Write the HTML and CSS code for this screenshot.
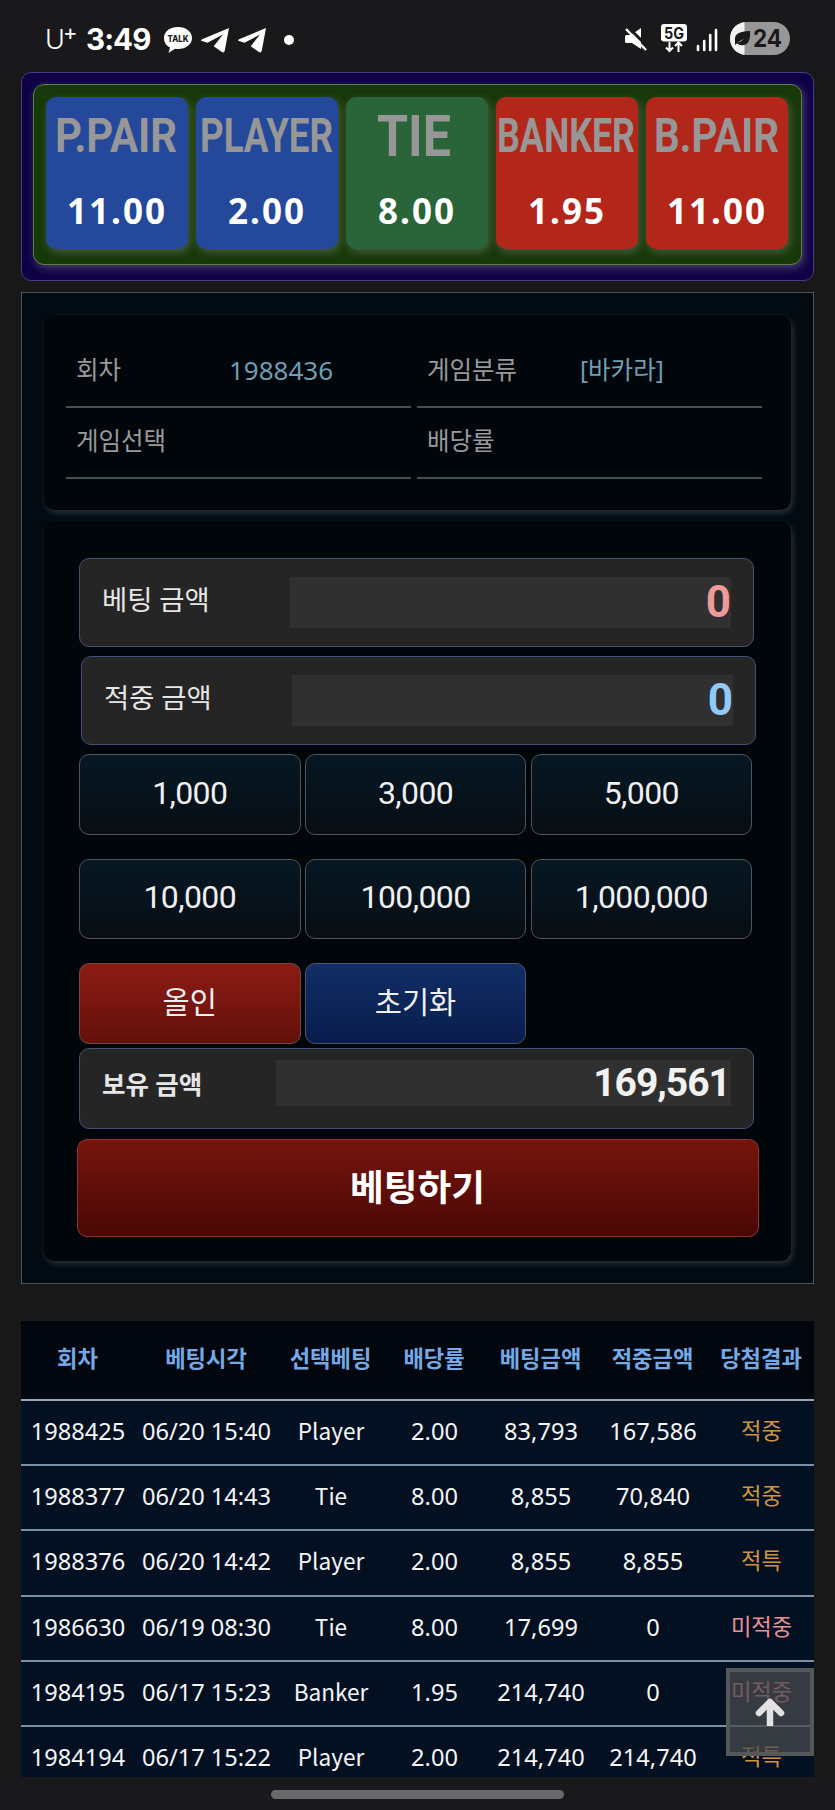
FILE: index.html
```html
<!DOCTYPE html>
<html lang="ko">
<head>
<meta charset="utf-8">
<title>바카라</title>
<link rel="stylesheet" href="styles.css">
</head>
<body>
<div class="phone">
  <header class="status">
    <div class="status-left">
      <span class="carrier">U<sup>+</sup></span>
      <span class="clock">3:49</span>
      <svg class="ic-talk" viewBox="0 0 30 28" width="30" height="28"><path fill="#fff" d="M15 1C7 1 1 5.600 1 12c0 4.500 2.500 8 6 9.500L5.500 27l6.500-4.200c1 .2 2 .2 3 .2 8 0 14-4.700 14-11S23 1 15 1z"/><text x="15" y="16" text-anchor="middle" textLength="21" lengthAdjust="spacingAndGlyphs" class="talk-text">TALK</text></svg>
      <svg class="ic-plane" viewBox="0 0 28 26" width="28" height="26"><path fill="#fff" d="M28 0 23.800 22.500q-.8 3-3.300 1.300l-7.800-5.600L22 6.500 6.500 14.800.8 13q-1.600-.7.300-1.800Z"/></svg>
      <svg class="ic-plane second" viewBox="0 0 28 26" width="28" height="26"><path fill="#fff" d="M28 0 23.800 22.500q-.8 3-3.300 1.300l-7.800-5.600L22 6.500 6.500 14.800.8 13q-1.600-.7.300-1.800Z"/></svg>
      <span class="dot"></span>
    </div>
    <div class="status-right">
      <svg class="ic-mute" viewBox="0 0 24 24" width="24" height="24"><path fill="#fff" d="M17 1v21L8 16H2.500Q1 16 1 14.500V9.500Q1 8 2.500 8H7Z"/><path d="M3 -1 25 21" stroke="#19191b" stroke-width="3"/><path d="M2 2 22 23" stroke="#fff" stroke-width="2.400"/></svg>
      <svg class="ic-5g" viewBox="0 0 26 30" width="26" height="30"><rect x="0" y="0" width="26" height="17.500" rx="3" fill="#fff"/><text x="13" y="14.500" text-anchor="middle" textLength="20" lengthAdjust="spacingAndGlyphs" class="g-text">5G</text><path d="M8.500 18v9M5 23.500 8.500 27l3.500-3.500M17.500 28v-9M14 22l3.500-3.500L21 22" stroke="#fff" stroke-width="2" fill="none"/></svg>
      <svg class="ic-signal" viewBox="0 0 24 24" width="24" height="24"><path d="M3 18v4M9.200 13v9M15.200 7v15M21 2v20" stroke="#fff" stroke-width="2.600" stroke-linecap="round"/></svg>
      <svg class="ic-batt" viewBox="0 0 60 33" width="60" height="33"><defs><clipPath id="pill"><rect width="60" height="33" rx="16.500"/></clipPath></defs><g clip-path="url(#pill)"><rect width="60" height="33" fill="#979797"/><rect width="14.500" height="33" fill="#f1f1f1"/></g><path fill="#19191b" d="M5 19C4 11.500 9 9.500 20 9q1 13-7 14.300-4 .3-6-2Q11 20 14 16.500 9 19.500 5 23z"/><text x="37.500" y="25" text-anchor="middle" textLength="29" lengthAdjust="spacingAndGlyphs" class="batt-text">24</text></svg>
    </div>
  </header>

  <main class="content">
    <section class="odds">
      <div class="odds-inner">
        <div class="odd blue"><svg width="142" height="78"><text x="9" y="55" textLength="122" lengthAdjust="spacingAndGlyphs" class="odd-name">P.PAIR</text></svg><span>11.00</span></div>
        <div class="odd blue"><svg width="142" height="78"><text x="4" y="55" textLength="133" lengthAdjust="spacingAndGlyphs" class="odd-name">PLAYER</text></svg><span>2.00</span></div>
        <div class="odd green"><svg width="142" height="78"><text x="31" y="59" textLength="74" lengthAdjust="spacingAndGlyphs" class="odd-name big">TIE</text></svg><span>8.00</span></div>
        <div class="odd red"><svg width="142" height="78"><text x="1" y="55" textLength="138" lengthAdjust="spacingAndGlyphs" class="odd-name">BANKER</text></svg><span>1.95</span></div>
        <div class="odd red"><svg width="142" height="78"><text x="8" y="55" textLength="125" lengthAdjust="spacingAndGlyphs" class="odd-name">B.PAIR</text></svg><span>11.00</span></div>
      </div>
    </section>

    <section class="panel">
      <div class="card info">
        <div class="info-cell"><span class="k">회차</span><span class="v num">1988436</span></div>
        <div class="info-cell"><span class="k">게임분류</span><span class="v">[바카라]</span></div>
        <div class="info-cell"><span class="k">게임선택</span></div>
        <div class="info-cell"><span class="k">배당률</span></div>
      </div>
      <div class="card bet">
        <div class="field"><span class="label">베팅 금액</span><span class="input pink">0</span></div>
        <div class="field shifted"><span class="label">적중 금액</span><span class="input sky">0</span></div>
        <div class="chips">
          <button>1,000</button><button>3,000</button><button>5,000</button>
          <button>10,000</button><button>100,000</button><button>1,000,000</button>
          <button class="allin">올인</button><button class="reset">초기화</button>
        </div>
        <div class="field balance"><span class="label">보유 금액</span><span class="input">169,561</span></div>
        <button class="submit">베팅하기</button>
      </div>
    </section>

    <table class="history">
      <colgroup><col class="c1"><col class="c2"><col class="c3"><col class="c4"><col class="c5"><col class="c6"><col class="c7"></colgroup>
      <thead><tr><th>회차</th><th>베팅시각</th><th>선택베팅</th><th>배당률</th><th>베팅금액</th><th>적중금액</th><th>당첨결과</th></tr></thead>
      <tbody>
        <tr><td>1988425</td><td>06/20 15:40</td><td class="pick">Player</td><td>2.00</td><td>83,793</td><td>167,586</td><td class="win">적중</td></tr>
        <tr><td>1988377</td><td>06/20 14:43</td><td class="pick">Tie</td><td>8.00</td><td>8,855</td><td>70,840</td><td class="win">적중</td></tr>
        <tr><td>1988376</td><td>06/20 14:42</td><td class="pick">Player</td><td>2.00</td><td>8,855</td><td>8,855</td><td class="win">적특</td></tr>
        <tr><td>1986630</td><td>06/19 08:30</td><td class="pick">Tie</td><td>8.00</td><td>17,699</td><td>0</td><td class="lose">미적중</td></tr>
        <tr><td>1984195</td><td>06/17 15:23</td><td class="pick">Banker</td><td>1.95</td><td>214,740</td><td>0</td><td class="lose">미적중</td></tr>
        <tr><td>1984194</td><td>06/17 15:22</td><td class="pick">Player</td><td>2.00</td><td>214,740</td><td>214,740</td><td class="win">적특</td></tr>
      </tbody>
    </table>
    <div class="to-top"><svg viewBox="0 0 30 28" width="30" height="28"><path fill="none" stroke="#e2e2e2" stroke-width="6.500" stroke-linejoin="round" d="M15 28V6"/><path d="M4 15 15 4l11 11" fill="none" stroke="#e2e2e2" stroke-width="6.500" stroke-linecap="round" stroke-linejoin="round"/></svg></div>
  </main>
  <footer class="nav"><span class="handle"></span></footer>
</div>
</body>
</html>
```

FILE: styles.css
```css
* { box-sizing: border-box; }
body {
  margin: 0;
  background: #181818;
  font-family: "Noto Sans", "Noto Sans CJK KR", sans-serif;
}
svg { display: block; flex: none; }
button { margin: 0; padding: 0; font: inherit; color: inherit; }

.phone {
  width: 835px;
  height: 1810px;
  display: flex;
  flex-direction: column;
  overflow: hidden;
}

/* status bar */
.status {
  flex: none;
  height: 72px;
  padding: 6px 45px 0 45px;
  display: flex;
  justify-content: space-between;
  align-items: center;
  background: #19191b;
  color: #fff;
}
.status-left, .status-right { display: flex; align-items: center; }
.status-right { margin-top: -1px; }
.carrier {
  width: 41px;
  padding-top: 2px;
  font: 300 27px/30px Inter, sans-serif;
  letter-spacing: -1px;
  white-space: nowrap;
}
.carrier sup { font-size: 22px; line-height: 0; font-weight: 400; vertical-align: 9px; margin-left: -1px; }
.clock {
  width: 77px;
  font: 700 29.5px/30px Inter, sans-serif;
  letter-spacing: -0.9px;
}
.ic-talk { margin-top: 2px; }
.talk-text { font: 800 9.5px Inter, sans-serif; fill: #19191b; }
.ic-plane { margin: 4px 0 0 8px; }
.ic-plane.second { margin-left: 9px; }
.dot { width: 10px; height: 10px; margin: 2px 0 0 18px; border-radius: 50%; background: #fff; }
.ic-5g { margin: 0 8px 0 13px; }
.g-text { font: 700 15.5px Inter, sans-serif; fill: #19191b; }
.ic-signal { margin: 2px 11px 0 0; }
.batt-text { font: 700 24px Inter, sans-serif; fill: #19191b; }

.content {
  position: relative;
  flex: 1;
  min-height: 0;
  overflow: hidden;
  padding: 0 21px;
}

/* odds */
.odds {
  width: 793px;
  height: 209px;
  padding: 11px;
  border: 1px solid #483f80;
  border-radius: 10px;
  background: #0f0046;
}
.odds-inner {
  height: 181px;
  padding: 12px;
  display: flex;
  gap: 8px;
  border: 1px solid #5f7c42;
  border-radius: 11px;
  background: #173909;
  box-shadow: 2px 3px 9px rgba(160, 160, 160, .4);
}
.odd {
  width: 142px;
  height: 152px;
  border-radius: 10px;
  text-align: center;
  box-shadow: 2px 3px 8px rgba(150, 150, 150, .4);
}
.odd span {
  display: block;
  margin-top: 11px;
  font-weight: 700;
  font-size: 35px;
  line-height: 50px;
  letter-spacing: 2px;
  color: #fff;
}
.odd-name { font: 700 48px Roboto, sans-serif; fill: #979797; }
.odd-name.big { font-size: 58px; }
.blue { background: #24489a; }
.green { background: #2a6439; }
.red { background: #b3271b; }

/* betting panel */
.panel {
  width: 793px;
  height: 992px;
  margin-top: 11px;
  padding: 22px;
  border: 1px solid #4a545d;
  background: #020a12;
}
.card {
  width: 747px;
  border-radius: 11px;
  background: #00060a;
  box-shadow: 2px 3px 6px rgba(200, 215, 215, .2);
}
.info {
  height: 195px;
  padding: 22px 23px 0 22px;
  display: grid;
  grid-template-columns: 345px 345px;
  grid-auto-rows: 71px;
  column-gap: 6px;
}
.info-cell {
  display: flex;
  align-items: center;
  border-bottom: 2px solid #484d50;
  padding: 0 0 4px 10px;
  font-size: 24.5px;
  line-height: 36px;
}
.k { width: 153px; color: #97999a; }
.v { color: #6f9db3; }
.v.num { font-size: 26px; }
.bet {
  height: 740px;
  margin-top: 11px;
  padding: 37px 33px 0 35px;
}
.field {
  width: 675px;
  height: 89px;
  padding: 0 22px;
  display: flex;
  align-items: center;
  justify-content: space-between;
  border: 1px solid #465073;
  border-radius: 10px;
  background: #252525;
}
.label {
  margin-top: -4px;
  font: 400 27.4px/40px Roboto, "Noto Sans CJK KR", sans-serif;
  color: #e6e6e6;
}
.input {
  width: 441px;
  height: 51px;
  background: #303030;
  text-align: right;
  font: 700 44px/51px Roboto, sans-serif;
}
.pink { color: #ef9a9a; }
.sky { color: #90caf9; }
.shifted { margin: 9px 0 0 2px; }
.chips {
  margin-top: 9px;
  display: grid;
  grid-template-columns: repeat(3, 221.5px);
  grid-auto-rows: 80.5px;
  gap: 24px 4.300px;
}
.chips button {
  border: 1px solid #515557;
  border-radius: 10px;
  background: linear-gradient(#061824, #070d13);
  font: 400 32px/40px Roboto, "Noto Sans CJK KR", sans-serif;
  letter-spacing: -0.6px;
  color: #eef0f2;
  padding-bottom: 3px;
}
.chips .allin, .chips .reset { font-size: 29.5px; letter-spacing: 0; padding-bottom: 1px; }
.chips .allin { background: linear-gradient(#8c1b13, #63110b); border-color: #6c4c47; }
.chips .reset { background: linear-gradient(#112e66, #091d4c); border-color: #47566e; }
.balance { height: 81px; margin-top: 4px; }
.balance .label { font-weight: 700; font-size: 25.5px; margin-top: -7px; }
.balance .input {
  width: 455px;
  height: 46px;
  margin-top: -11px;
  padding-right: 1px;
  font-size: 39px;
  line-height: 47px;
  letter-spacing: -1px;
  color: #f2f2f2;
}
.submit {
  display: block;
  width: 682px;
  height: 98px;
  margin: 10px 0 0 -2px;
  border: 1px solid #8e3431;
  border-radius: 10px;
  background: linear-gradient(#76140d, #4a0805);
  font: 700 36.7px/50px Roboto, "Noto Sans CJK KR", sans-serif;
  color: #fff;
  padding: 2px 1px 0 0;
}

/* history */
.history {
  width: 793px;
  margin-top: 37px;
  table-layout: fixed;
  border-collapse: separate;
  border-spacing: 0;
  background: #031022;
  color: #f4f6f8;
}
.c1 { width: 114px; } .c2 { width: 143px; } .c3 { width: 106px; } .c4 { width: 101px; }
.c5 { width: 112px; } .c6 { width: 112px; } .c7 { width: 105px; }
.history th, .history td { padding: 0; text-align: center; white-space: nowrap; line-height: 30px; }
.history th {
  height: 80px;
  padding: 0 1px 2px 0;
  background: #01060f;
  border-bottom: 2px solid #9aa9b8;
  font-size: 22.2px;
  color: #74a9e6;
}
.history td {
  height: 65.2px;
  padding-bottom: 3px;
  border-bottom: 2px solid #7990a6;
  font-size: 23.6px;
}
.history .win, .history .lose { font-size: 22.2px; }
.history .pick { font-family: "Noto Sans CJK KR", sans-serif; font-size: 22.6px; }
.win { color: #cf9440; }
.lose { color: #ec9095; }

.to-top {
  position: absolute;
  left: 726px;
  bottom: 21px;
  width: 88px;
  height: 88px;
  display: flex;
  align-items: center;
  justify-content: center;
  border: 4px solid #55585b;
  background: rgba(72, 74, 78, .75);
}

.nav {
  flex: none;
  height: 33px;
  padding-top: 13px;
  background: #19191b;
}
.handle {
  display: block;
  width: 293px;
  height: 9px;
  margin-left: 271px;
  border-radius: 5px;
  background: #69696b;
}
```
